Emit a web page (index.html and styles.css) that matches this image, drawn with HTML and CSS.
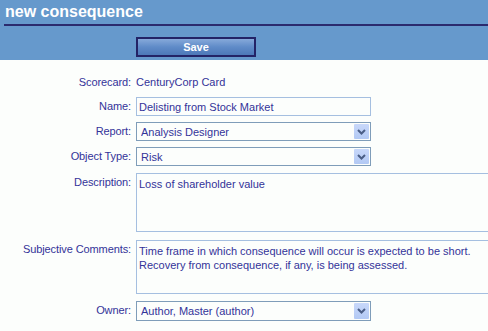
FILE: index.html
```html
<!DOCTYPE html>
<html lang="en">
<head>
    <meta charset="UTF-8">
    <title>new consequence</title>
    <link rel="stylesheet" href="styles.css">
</head>
<body>
    <div class="header">
        <h1 class="title">new consequence</h1>
        <button type="button" class="save">Save</button>
    </div>

    <form class="form">
        <label class="label">Scorecard:</label>
        <div class="static">CenturyCorp Card</div>

        <label class="label" for="name">Name:</label>
        <input type="text" id="name" class="text" value="Delisting from Stock Market">

        <label class="label" for="report">Report:</label>
        <div class="select-wrap">
            <select id="report" class="select">
                <option>Analysis Designer</option>
            </select>
            <span class="arrow"><svg width="9" height="6" viewBox="0 0 9 6"><path d="M1 1 L4.5 4.5 L8 1" fill="none" stroke="#4a5e86" stroke-width="2"/></svg></span>
        </div>

        <label class="label" for="type">Object Type:</label>
        <div class="select-wrap">
            <select id="type" class="select">
                <option>Risk</option>
            </select>
            <span class="arrow"><svg width="9" height="6" viewBox="0 0 9 6"><path d="M1 1 L4.5 4.5 L8 1" fill="none" stroke="#4a5e86" stroke-width="2"/></svg></span>
        </div>

        <label class="label label-desc" for="desc">Description:</label>
        <textarea id="desc" class="area area-desc">Loss of shareholder value</textarea>

        <label class="label label-comments" for="comments">Subjective Comments:</label>
        <textarea id="comments" class="area area-comments">Time frame in which consequence will occur is expected to be short.
Recovery from consequence, if any, is being assessed.</textarea>

        <label class="label label-owner" for="owner">Owner:</label>
        <div class="select-wrap owner-wrap">
            <select id="owner" class="select">
                <option>Author, Master (author)</option>
            </select>
            <span class="arrow"><svg width="9" height="6" viewBox="0 0 9 6"><path d="M1 1 L4.5 4.5 L8 1" fill="none" stroke="#4a5e86" stroke-width="2"/></svg></span>
        </div>
    </form>
</body>
</html>
```

FILE: styles.css
```css
body {
    margin: 0;
    background-color: #fcfefc;
    font-family: "Liberation Sans", Arial, sans-serif;
    font-size: 11px;
    color: #333399;
    overflow: hidden;
}
.header {
    background-color: #6699cc;
    height: 60px;
    padding-top: 2px;
    box-sizing: border-box;
}
.title {
    margin: 0 0 0 4px;
    padding-left: 1px;
    height: 22px;
    line-height: 20px;
    font-size: 16px;
    font-weight: bold;
    color: white;
    border-bottom: 2px solid #2b2b6e;
}
.save {
    display: block;
    margin: 11px 0 0 136px;
    width: 120px;
    height: 20px;
    padding: 0;
    border: 2px solid #232366;
    background: linear-gradient(#86a9da, #5f8bc8 50%, #4d78b8);
    color: white;
    font-family: "Liberation Sans", Arial, sans-serif;
    font-size: 11px;
    font-weight: bold;
    cursor: pointer;
}
.form {
    display: grid;
    grid-template-columns: 131px 360px;
    column-gap: 5px;
    row-gap: 6px;
    padding-top: 14px;
}
.label {
    text-align: right;
    padding-top: 3px;
    line-height: 13px;
    letter-spacing: -0.1px;
}
.static {
    line-height: 16px;
    height: 16px;
    margin-bottom: 1px;
}
.label:first-child {
    padding-top: 2px;
}
.text {
    width: 235px;
    height: 19px;
    box-sizing: border-box;
    margin: 0;
    padding: 0 2px;
    border: 1px solid #a5bfe0;
    background: #fcfefc;
    font-family: inherit;
    font-size: 11px;
    color: #333399;
    outline: none;
}
.select-wrap {
    position: relative;
    width: 235px;
    height: 19px;
}
.select {
    appearance: none;
    -webkit-appearance: none;
    width: 100%;
    height: 100%;
    box-sizing: border-box;
    margin: 0;
    padding: 0 4px;
    border: 1px solid #7f9db9;
    border-radius: 0;
    background: #fcfefc;
    font-family: inherit;
    font-size: 11px;
    color: #333399;
}
.arrow {
    position: absolute;
    top: 2px;
    right: 2px;
    width: 15px;
    bottom: 2px;
    display: flex;
    align-items: center;
    justify-content: center;
    background: linear-gradient(#c8d8fa, #b2c9f4);
    border-radius: 1px;
    pointer-events: none;
}
.area {
    width: 360px;
    box-sizing: border-box;
    margin: 0;
    padding: 3px 2px;
    border: 1px solid #a5bfe0;
    border-right: none;
    background: #fcfefc;
    font-family: inherit;
    font-size: 11px;
    line-height: 14px;
    color: #333399;
    resize: none;
    overflow: hidden;
}
.label-desc {
    margin-top: 1px;
    padding-top: 3px;
}
.area-desc {
    margin-top: 1px;
    height: 59px;
}
.label-comments {
    margin-top: 2px;
}
.area-comments {
    margin-top: 2px;
    height: 54px;
}
.label-owner {
    margin-top: 1px;
}
.owner-wrap {
    margin-top: 1px;
    height: 20px;
}
```
